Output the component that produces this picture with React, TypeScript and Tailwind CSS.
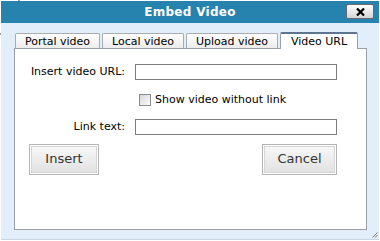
import React from "react";

const font = { fontFamily: '"DejaVu Sans", Verdana, sans-serif' };

function Tab({ label, w, active }: { label: string; w: string; active?: boolean }) {
  if (active) {
    return (
      <div
        className={`${w} h-[17px] -mb-[1px] relative z-10 flex items-center justify-center bg-white border-x border-[#9aa3ad] border-t-2 border-t-[#5d7590] rounded-t-[2px] text-[11px] text-black leading-none`}
      >
        <span className="pb-[1px]">{label}</span>
      </div>
    );
  }
  return (
    <div
      className={`${w} h-[15px] flex items-center justify-center bg-gradient-to-b from-white to-[#ececec] border-x border-t border-[#a8acb1] rounded-t-[2px] text-[11px] text-black leading-none`}
    >
      <span>{label}</span>
    </div>
  );
}

function Btn({ label, w }: { label: string; w: string }) {
  return (
    <div className={`${w} h-[31px] border border-[#b4b4b4] p-[1px] bg-white`}>
      <div className="w-full h-full border border-[#d6d6d6] bg-gradient-to-b from-[#f7f7f7] to-[#e2e2e2] flex items-center justify-center text-[13px] text-[#333]">
        {label}
      </div>
    </div>
  );
}

export default function App() {
  return (
    <div className="w-[380px] h-[241px] bg-white relative overflow-hidden" style={font}>
      <div className="absolute left-[18px] top-0 w-[2px] h-[1px] bg-[#9a9a9a]" />
      <div className="absolute left-0 top-[33px] w-[1px] h-[2px] bg-[#9a9a9a]" />
      <div className="ml-[1px] mt-[1px] w-[378px] h-[239px] flex flex-col border-b border-[#c7d6e4]">
        <div className="h-[22px] bg-[#2683ae] relative flex items-center justify-center">
          <span className="text-white font-bold text-[12px] tracking-[0.3px]">Embed Video</span>
          <div className="absolute right-[5px] top-[3px] w-[28px] h-[15px] rounded-[2px] border border-[#6a6a6a] bg-gradient-to-b from-white to-[#d4d4d4] flex items-center justify-center">
            <svg width="9" height="8" viewBox="0 0 9 8">
              <path d="M1 0.5 L8 7.5 M8 0.5 L1 7.5" stroke="#000" strokeWidth="2.2" />
            </svg>
          </div>
        </div>
        <div className="flex-1 bg-[#e2effb] pl-[13px] pr-[12px] pt-[9px] relative">
          <div className="flex items-end gap-[2px] pl-[1px] h-[16px]">
            <Tab label="Portal video" w="w-[85px]" />
            <Tab label="Local video" w="w-[82px]" />
            <Tab label="Upload video" w="w-[92px]" />
            <Tab label="Video URL" w="w-[78px]" active />
          </div>
          <div className="h-[182px] bg-white border border-[#9aa0a6] text-[11px] text-black">
            <div className="flex items-center mt-[15px]">
              <div className="w-[110px] text-right">Insert video URL:</div>
              <div className="ml-[10px] w-[202px] h-[16px] border border-[#7e7e7e] bg-white" />
            </div>
            <div className="flex items-center mt-[11px] ml-[124px]">
              <div className="w-[12px] h-[12px] border border-[#8c8c8c] bg-gradient-to-br from-[#d4d4d4] to-white p-[1px]">
                <div className="w-full h-full bg-gradient-to-br from-[#dcdcdc] to-[#f8f8f8]" />
              </div>
              <span className="ml-[4px]">Show video without link</span>
            </div>
            <div className="flex items-center mt-[11px]">
              <div className="w-[110px] text-right">Link text:</div>
              <div className="ml-[10px] w-[202px] h-[16px] border border-[#7e7e7e] bg-white" />
            </div>
            <div className="flex justify-between mt-[8px] ml-[14px] w-[308px]">
              <Btn label="Insert" w="w-[70px]" />
              <Btn label="Cancel" w="w-[75px]" />
            </div>
          </div>
          <svg className="absolute right-[1px] bottom-[1px]" width="6" height="6" viewBox="0 0 6 6">
            <path d="M5.5 0.5 L0.5 5.5 M5.5 3 L3 5.5" stroke="#7a7a7a" strokeWidth="1" />
          </svg>
        </div>
      </div>
    </div>
  );
}
